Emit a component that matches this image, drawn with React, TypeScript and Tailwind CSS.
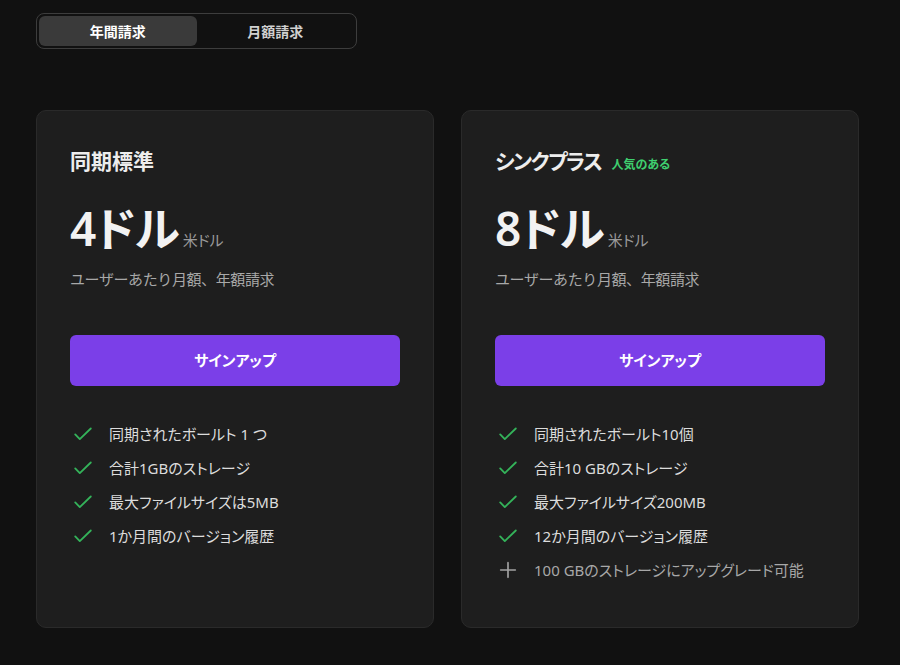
import React from "react";

const font = { fontFamily: '"Noto Sans", "Noto Sans CJK JP", sans-serif', fontFeatureSettings: '"palt"' };

function CheckIcon() {
  return (
    <svg width="22" height="22" viewBox="0 0 24 24" fill="none" stroke="#34b35a" strokeWidth="2" strokeLinecap="round" strokeLinejoin="round">
      <path d="M3.5 12.5l5 5L20.5 6" />
    </svg>
  );
}

function PlusIcon() {
  return (
    <svg width="22" height="22" viewBox="0 0 24 24" fill="none" stroke="#a3a3a3" strokeWidth="1.8" strokeLinecap="round">
      <path d="M12 4v16M4 12h16" />
    </svg>
  );
}

type Feature = { text: string; plus?: boolean };

function Card({ title, badge, price, features, tight }: { title: string; badge?: string; price: string; features: Feature[]; tight?: boolean }) {
  return (
    <div className="rounded-[10px] border border-[#2a2a2a] bg-[#1e1e1e] px-[33px] pt-[36px] pb-[45px]">
      <div className="flex items-baseline gap-[10px] h-[28px]">
        <span className={"text-[21px] font-bold text-[#ededed] leading-[28px] " + (tight ? "tracking-[-1.5px]" : "")}>{title}</span>
        {badge && <span className="text-[12px] font-bold text-[#3fcf6f]">{badge}</span>}
      </div>
      <div className="mt-[27px] flex items-baseline gap-[4px]">
        <span className="text-[46px] font-semibold leading-[52px] text-[#f2f2f2] tracking-[-1px]">{price}</span>
        <span className="text-[15px] text-[#9a9a9a]">米ドル</span>
      </div>
      <div className="mt-[14px] text-[15px] text-[#a8a8a8] leading-[22px] [font-feature-settings:normal] tracking-[-0.4px]">ユーザーあたり月額、年額請求</div>
      <button className="mt-[45px] w-full h-[51px] rounded-[6px] bg-[#7b3fe8] text-white text-[15px] font-bold">サインアップ</button>
      <ul className="mt-[36px] flex flex-col gap-[10px]">
        {features.map((f, i) => (
          <li key={i} className="flex items-center h-[24px] whitespace-nowrap">
            <span className="w-[39px] pl-[2px] flex items-center">{f.plus ? <PlusIcon /> : <CheckIcon />}</span>
            <span className={"text-[15px] " + (f.plus ? "text-[#a8a8a8]" : "text-[#dcdcdc]")}>{f.text}</span>
          </li>
        ))}
      </ul>
    </div>
  );
}

export default function App() {
  return (
    <div style={font} className="min-h-[665px] w-[900px] bg-[#111111] pt-[13px] pl-[36px]">
      <div className="flex w-[321px] h-[36px] rounded-[8px] border border-[#3d3d3d] p-[2px]">
        <div className="flex-1 rounded-[6px] bg-[#3a3a3a] flex items-center justify-center text-[14px] font-bold text-white">年間請求</div>
        <div className="flex-1 flex items-center justify-center text-[14px] font-bold text-[#d0d0d0]">月額請求</div>
      </div>
      <div className="mt-[61px] grid grid-cols-2 gap-[27px] w-[823px]">
        <Card
          title="同期標準"
          price="4ドル"
          features={[
            { text: "同期されたボールト 1 つ" },
            { text: "合計1GBのストレージ" },
            { text: "最大ファイルサイズは5MB" },
            { text: "1か月間のバージョン履歴" },
          ]}
        />
        <Card
          title="シンクプラス"
          badge="人気のある"
          price="8ドル"
          tight
          features={[
            { text: "同期されたボールト10個" },
            { text: "合計10 GBのストレージ" },
            { text: "最大ファイルサイズ200MB" },
            { text: "12か月間のバージョン履歴" },
            { text: "100 GBのストレージにアップグレード可能", plus: true },
          ]}
        />
      </div>
    </div>
  );
}
